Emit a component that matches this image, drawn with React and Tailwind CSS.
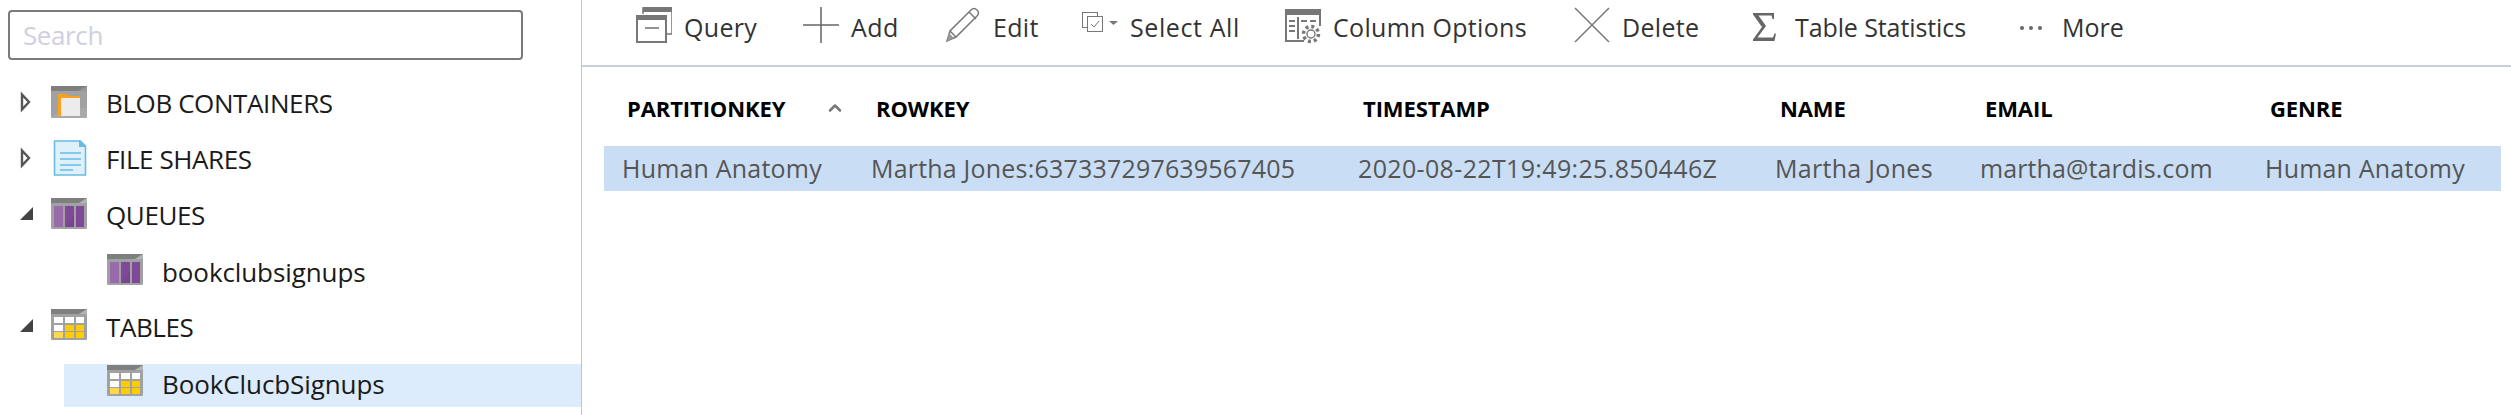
import React from "react";
import { ChevronUp } from "lucide-react";

const FONT = "font-['Open_Sans','Noto_Sans',sans-serif]";

const Frame = ({ children, w = 36, h = 36, className = "" }) => (
  <svg width={w} height={h} viewBox="0 0 36 36" className={`shrink-0 ${className}`}>
    {children}
  </svg>
);

const BlobIcon = () => (
  <Frame>
    <rect x="0" y="2" width="36" height="32" rx="1.5" fill="#a0a1a2" />
    <rect x="0" y="2" width="36" height="5" fill="#7f7f7f" />
    <path d="M27 7l9-5v5zM0 34l12-10h24v10z" fill="#b3b4b5" opacity="0.45" />
    <path d="M7 10h9l2 2h11v20H7z" fill="#ff9f1c" />
    <rect x="10" y="14" width="19" height="18" fill="#ececec" />
  </Frame>
);

const FileIcon = () => (
  <Frame>
    <path d="M3.500 1h26l5 5v29h-31z" fill="#def0fa" stroke="#68bbe3" strokeWidth="1.6" />
    <path d="M28 0l7 7h-7z" fill="#68bbe3" />
    <path d="M9 13h21M9 19h21M9 25h21M9 30h13" stroke="#68bbe3" strokeWidth="1.6" />
  </Frame>
);

const QueueIcon = () => (
  <Frame>
    <rect x="0" y="2" width="36" height="31" rx="1.5" fill="#a0a1a2" />
    <rect x="0" y="2" width="36" height="5" fill="#7f7f7f" />
    <path d="M28 7l8-5v5z" fill="#b3b4b5" />
    <rect x="3" y="10" width="9" height="21" fill="#9a6bab" />
    <rect x="14" y="10" width="9" height="21" fill="#804998" />
    <rect x="25" y="10" width="8" height="21" fill="#804998" />
    <path d="M14 31l9-11v11z" fill="#6f3d86" opacity="0.5" />
  </Frame>
);

const TableIcon = () => (
  <Frame>
    <rect x="0" y="1" width="36" height="31" rx="1.5" fill="#a0a1a2" />
    <rect x="0" y="1" width="36" height="5" fill="#7f7f7f" />
    <path d="M28 6l8-5v5z" fill="#b3b4b5" />
    <rect x="3" y="9" width="9" height="6" fill="#fff" />
    <rect x="14" y="9" width="9" height="6" fill="#fff" />
    <rect x="25" y="9" width="8" height="6" fill="#fff" />
    <rect x="3" y="17" width="9" height="6" fill="#fff" />
    <rect x="14" y="17" width="9" height="6" fill="#ffcc00" />
    <rect x="25" y="17" width="8" height="6" fill="#ffcc00" />
    <rect x="3" y="24" width="9" height="6" fill="#ffd94d" />
    <rect x="14" y="24" width="9" height="6" fill="#ffcc00" />
    <rect x="25" y="24" width="8" height="6" fill="#ffcc00" />
  </Frame>
);

const Arrow = ({ open }) => (
  <svg width="20" height="28" viewBox="0 0 20 28" className="shrink-0">
    {open ? (
      <path d="M17 7v13H4z" fill="#444" />
    ) : (
      <path d="M6 6.500l7 7.500-7 7.500z" fill="#fff" stroke="#555" strokeWidth="2.400" />
    )}
  </svg>
);

const QueryIcon = () => (
  <Frame>
    <path d="M7 7V1h29v26h-6" fill="none" stroke="#777" strokeWidth="1.5" />
    <rect x="7" y="0" width="29" height="5" fill="#777" />
    <rect x="1" y="9" width="29" height="26" fill="none" stroke="#777" strokeWidth="2" />
    <rect x="0" y="8" width="31" height="5" fill="#777" />
    <path d="M9 21h14" stroke="#777" strokeWidth="1.6" />
  </Frame>
);

const AddIcon = () => (
  <Frame>
    <path d="M0 18h36M18 0v36" stroke="#666" strokeWidth="1.5" />
  </Frame>
);

const EditIcon = () => (
  <Frame>
    <path
      d="M2 34l3-10L26 3c2-2 4-2 6 0s2 4 0 6L11 30zM5 24l6 6M24 5l7 7"
      fill="none"
      stroke="#777"
      strokeWidth="1.5"
    />
    <path d="M2 34l2-8 5 5z" fill="#999" />
  </Frame>
);

const SelectAllIcon = () => (
  <svg width="36" height="20" viewBox="0 0 36 20" className="shrink-0">
    <rect x="0.500" y="0.500" width="15" height="15" fill="#fff" stroke="#777" />
    <rect x="5.500" y="4.500" width="15" height="15" fill="#fff" stroke="#777" />
    <path d="M9 12l3 3 5-6" fill="none" stroke="#777" />
    <path d="M27 9h9l-4.500 4z" fill="#777" />
  </svg>
);

const ColumnIcon = () => (
  <Frame>
    <path d="M1 6h34v12M1 6v27h18" fill="none" stroke="#777" strokeWidth="2" />
    <rect x="0" y="1" width="36" height="6" fill="#777" />
    <path d="M13 9v22M4 13h6M4 18h6M4 23h6M16 13h6M25 13h6" stroke="#777" strokeWidth="2" />
    <circle cx="26" cy="26" r="7.500" fill="#fff" stroke="#777" strokeWidth="3.500" strokeDasharray="3 2.900" />
    <circle cx="26" cy="26" r="4" fill="#fff" stroke="#777" strokeWidth="1.400" />
  </Frame>
);

const DeleteIcon = () => (
  <Frame>
    <path d="M1 1l34 34M35 1L1 35" stroke="#777" strokeWidth="1.5" />
  </Frame>
);

const SigmaIcon = () => (
  <svg width="23" height="28" viewBox="0 0 23 28" className="shrink-0">
    <path d="M0 0h21v6h-1.500l-1-3.500H5.500L13 13 4.500 24.500H20l1.500-4H23L21.500 28H0v-1.500L9 14 0 1.500z" fill="#666" />
  </svg>
);

const DotsIcon = () => (
  <svg width="22" height="4" viewBox="0 0 22 4" className="shrink-0">
    <circle cx="2" cy="2" r="2" fill="#666" />
    <circle cx="11" cy="2" r="2" fill="#666" />
    <circle cx="20" cy="2" r="2" fill="#666" />
  </svg>
);

const toolbar = [
  { label: "Query", icon: <QueryIcon />, w: "w-[167px]", gap: "gap-3", lift: "mb-[5px]", track: "tracking-[0.3px]" },
  { label: "Add", icon: <AddIcon />, w: "w-[142px]", gap: "gap-3", lift: "mb-[5px]", track: "tracking-[0.5px]" },
  { label: "Edit", icon: <EditIcon />, w: "w-[137px]", gap: "gap-3", lift: "mb-[5px]", track: "tracking-[0.3px]" },
  { label: "Select All", icon: <SelectAllIcon />, w: "w-[203px]", gap: "gap-3", lift: "mb-[11px]", track: "tracking-[0.6px]" },
  { label: "Column Options", icon: <ColumnIcon />, w: "w-[289px]", gap: "gap-3", lift: "mb-[3px]", track: "tracking-[0.3px]" },
  { label: "Delete", icon: <DeleteIcon />, w: "w-[179px]", gap: "gap-3", lift: "mb-[5px]", track: "tracking-[0.3px]" },
  { label: "Table Statistics", icon: <SigmaIcon />, w: "w-[267px]", gap: "gap-[19px]", lift: "mb-[2px]", track: "tracking-[-0.1px]" },
  { label: "More", icon: <DotsIcon />, w: "w-[110px]", gap: "gap-5", lift: "mt-[1px]", track: "tracking-[0px]" },
];

const columns = [
  { head: "PARTITIONKEY", value: "Human Anatomy", w: "w-[249px]", track: "tracking-[0.2px]" },
  { head: "ROWKEY", value: "Martha Jones:637337297639567405", w: "w-[487px]", track: "tracking-[0.2px]" },
  { head: "TIMESTAMP", value: "2020-08-22T19:49:25.850446Z", w: "w-[417px]", track: "tracking-[0.35px]" },
  { head: "NAME", value: "Martha Jones", w: "w-[205px]", track: "tracking-[0.3px]" },
  { head: "EMAIL", value: "martha@tardis.com", w: "w-[285px]", track: "tracking-[0.1px]" },
  { head: "GENRE", value: "Human Anatomy", w: "w-[254px]", track: "tracking-[0.2px]" },
];

const TreeRow = ({ arrow, icon, label, child, selected }) => (
  <div
    className={`flex items-center h-[43px] pb-[7px] ${child ? "ml-[64px] pl-[43px]" : "pl-[16px]"} ${
      selected ? "bg-[#dcecfc]" : ""
    }`}
  >
    {!child && (
      <div className="w-[35px]">
        <Arrow open={arrow === "open"} />
      </div>
    )}
    {icon}
    <span
      className={`ml-[19px] text-[26px] leading-[36px] text-[#1a1a1a] ${
        child ? "mt-[3px] tracking-[-0.1px]" : "mt-[1px] tracking-[-0.4px]"
      }`}
    >
      {label}
    </span>
  </div>
);

export default function App() {
  return (
    <div className={`flex w-[2511px] h-[415px] bg-white overflow-hidden ${FONT}`}>
      <aside className="w-[582px] h-full shrink-0 border-r border-[#c4c4c4] pt-[10px]">
        <div className="ml-2 w-[515px] h-[50px] border-2 border-[#7a7a7a] rounded-sm flex items-center pl-[13px] text-[26px] tracking-[-0.4px] text-[#ced0e0]">
          Search
        </div>
        <div className="mt-[24px] flex flex-col gap-[13px]">
          <TreeRow icon={<BlobIcon />} label="BLOB CONTAINERS" />
          <TreeRow icon={<FileIcon />} label="FILE SHARES" />
          <TreeRow arrow="open" icon={<QueueIcon />} label="QUEUES" />
          <TreeRow child icon={<QueueIcon />} label="bookclubsignups" />
          <TreeRow arrow="open" icon={<TableIcon />} label="TABLES" />
          <TreeRow child selected icon={<TableIcon />} label="BookClucbSignups" />
        </div>
      </aside>
      <main className="flex-1 min-w-0 flex flex-col">
        <div className="h-[67px] border-b-2 border-[#c8cfdd] pl-[54px] pb-[10px] flex items-center">
          {toolbar.map((item) => (
            <div key={item.label} className={`flex items-center shrink-0 ${item.w} ${item.gap}`}>
              <div className={item.lift}>{item.icon}</div>
              <span className={`text-[25px] ${item.track} text-[#333]`}>{item.label}</span>
            </div>
          ))}
        </div>
        <div className="pl-[22px] pr-[10px]">
          <div className="flex h-[79px] items-center pt-[3px]">
            {columns.map((col, i) => (
              <div key={col.head} className={`${col.w} shrink-0 pl-[23px] flex items-center`}>
                <span className="text-[22px] font-bold tracking-[-0.1px] text-black">{col.head}</span>
                {i === 0 && <ChevronUp size={20} strokeWidth={3} className="ml-[40px] text-[#777]" />}
              </div>
            ))}
          </div>
          <div className="flex h-[45px] items-center bg-[#c9def5]">
            {columns.map((col) => (
              <div
                key={col.head}
                className={`${col.w} shrink-0 pl-[18px] text-[25px] ${col.track} text-[#555] whitespace-nowrap`}
              >
                {col.value}
              </div>
            ))}
          </div>
        </div>
      </main>
    </div>
  );
}
